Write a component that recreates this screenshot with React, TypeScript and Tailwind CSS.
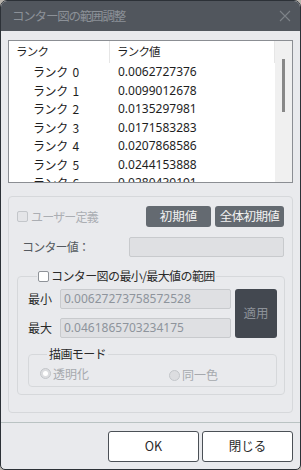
import React from 'react'

const rows = [
  ['ランク 0', '0.0062727376'],
  ['ランク 1', '0.0099012678'],
  ['ランク 2', '0.0135297981'],
  ['ランク 3', '0.0171583283'],
  ['ランク 4', '0.0207868586'],
  ['ランク 5', '0.0244153888'],
  ['ランク 6', '0.0280439191'],
]

const font = { fontFamily: '"Noto Sans CJK JP", "Noto Sans", sans-serif' }

function Check({ light }: { light?: boolean }) {
  return (
    <span
      className={
        light
          ? 'inline-block w-[11px] h-[11px] rounded-[2px] border border-[#8e9298] bg-white shrink-0'
          : 'inline-block w-[11px] h-[11px] rounded-[2px] border border-[#c3c6ca] bg-[#e4e5e8] shrink-0'
      }
    />
  )
}

function Radio({ dot }: { dot?: boolean }) {
  return (
    <span className="w-[11px] h-[11px] rounded-full border border-[#c3c6ca] bg-[#dcdde0] flex items-center justify-center shrink-0">
      {dot && <span className="w-[5px] h-[5px] rounded-full bg-white" />}
    </span>
  )
}

export default function App() {
  return (
    <div className="w-[301px] h-[470px] bg-[#b9b4ad]" style={font}>
      <div className="h-full flex flex-col rounded-t-[7px] rounded-b-[5px] overflow-hidden border border-[#2c3137] bg-[#e9eaed]">
        {/* title bar */}
        <div className="h-[30px] shrink-0 bg-[#51565d] flex items-center justify-between pl-[11px] pr-[8px]">
          <span className="text-[12.5px] tracking-[-1.2px] text-[#8c9198]">コンター図の範囲調整</span>
          <svg width="12" height="12" viewBox="0 0 12 12" className="mr-[1px]">
            <path d="M1 1L11 11M11 1L1 11" stroke="#7d8288" strokeWidth="1.1" />
          </svg>
        </div>

        {/* body */}
        <div className="flex-1 px-[7px] pt-[9px]">
          {/* list */}
          <div className="h-[143px] border border-[#8b8e93] bg-white flex overflow-hidden">
            <div className="flex-1 flex flex-col">
              <div className="h-[22px] shrink-0 flex items-center text-[11.5px] tracking-[-0.8px] text-[#1e1e1e]">
                <div className="w-[101px] pl-[7px] h-full flex items-center border-r border-[#e6e6e6]">ランク</div>
                <div className="flex-1 pl-[7px] h-full flex items-center border-r border-[#e6e6e6]">ランク値</div>
              </div>
              {rows.map(([k, v]) => (
                <div key={k} className="h-[18.5px] shrink-0 flex items-center text-[12px] text-[#1e1e1e]">
                  <div className="w-[101px] pl-[24px] tracking-[-0.4px] whitespace-pre">{k.replace(' ', '  ')}</div>
                  <div className="flex-1 pl-[8px]" style={{ fontFamily: '"Noto Sans", sans-serif' }}>{v}</div>
                </div>
              ))}
            </div>
            <div className="w-[17px] shrink-0 bg-[#f0f0f0] flex justify-center pt-[18px]">
              <div className="w-[3px] h-[53px] bg-[#888888]" />
            </div>
          </div>

          {/* outer group */}
          <div className="mt-[13px] h-[217px] border border-[#d6d8db] rounded-[4px] px-[8px] pt-[9px]">
            <div className="flex items-center h-[21px]">
              <Check />
              <span className="ml-[3px] text-[12px] tracking-[-0.8px] text-[#abaeb3]">ユーザー定義</span>
              <div className="ml-auto flex gap-[4px]">
                <button className="w-[65px] h-[21px] rounded-[3px] bg-[#646a71] text-[12.5px] text-[#f2f2f2]">初期値</button>
                <button className="w-[69px] h-[21px] rounded-[3px] bg-[#646a71] text-[12.5px] tracking-[-0.6px] text-[#f2f2f2]">全体初期値</button>
              </div>
            </div>
            <div className="flex items-center mt-[10px] h-[20px]">
              <span className="pl-[5px] text-[12px] tracking-[-0.8px] text-[#555a60]">コンター値：</span>
              <div className="ml-auto w-[155px] h-[20px] rounded-[2px] border border-[#c8cacd] bg-[#dfe0e3]" />
            </div>

            {/* inner group */}
            <fieldset className="mt-[10px] border border-[#d6d8db] rounded-[4px] pl-[10px] pr-[7px] pb-[7px]">
              <legend className="ml-[9px] px-[1px] flex items-center">
                <Check light />
                <span className="ml-[2px] text-[12px] tracking-[-0.6px] text-[#2a2a2a]">コンター図の最小/最大値の範囲</span>
              </legend>
              <div className="flex gap-[4px] mt-[4px]">
                <div className="flex flex-col gap-[9px]">
                  <div className="flex items-center h-[20px]">
                    <span className="w-[32px] text-[12px] text-[#2a2a2a]">最小</span>
                    <div className="w-[171px] h-[20px] rounded-[2px] border border-[#c8cacd] bg-[#dfe0e3] flex items-center pl-[3px] text-[12px] text-[#8e949c]" style={{ fontFamily: '"Noto Sans", sans-serif' }}>0.00627273758572528</div>
                  </div>
                  <div className="flex items-center h-[20px]">
                    <span className="w-[32px] text-[12px] text-[#2a2a2a]">最大</span>
                    <div className="w-[171px] h-[20px] rounded-[2px] border border-[#c8cacd] bg-[#dfe0e3] flex items-center pl-[3px] text-[12px] text-[#8e949c]" style={{ fontFamily: '"Noto Sans", sans-serif' }}>0.0461865703234175</div>
                  </div>
                </div>
                <button className="w-[42px] h-[49px] rounded-[3px] bg-[#434850] text-[12.5px] text-[#8d9299]">適用</button>
              </div>

              {/* draw mode */}
              <fieldset className="mt-[7px] h-[42px] border border-[#d6d8db] rounded-[4px] pl-[11px]">
                <legend className="ml-[7px] px-[2px] text-[12px] tracking-[-0.6px] text-[#2a2a2a]">描画モード</legend>
                <div className="flex items-center">
                  <div className="flex items-center w-[129px]">
                    <Radio dot />
                    <span className="ml-[2px] text-[12px] text-[#a6a9ae]">透明化</span>
                  </div>
                  <div className="flex items-center mt-[3px]">
                    <Radio />
                    <span className="ml-[2px] text-[12px] text-[#a6a9ae]">同一色</span>
                  </div>
                </div>
              </fieldset>
            </fieldset>
          </div>
        </div>

        {/* footer */}
        <div className="h-[47px] shrink-0 border-t border-[#bac3c3] flex justify-end gap-[3px] pt-[8px] pr-[7px]">
          <button className="w-[91px] h-[31px] rounded-[3px] border border-[#4b5056] bg-white text-[12.5px] text-[#2a2a2a]">OK</button>
          <button className="w-[91px] h-[31px] rounded-[3px] border border-[#4b5056] bg-white text-[12.5px] text-[#2a2a2a]">閉じる</button>
        </div>
      </div>
    </div>
  )
}
